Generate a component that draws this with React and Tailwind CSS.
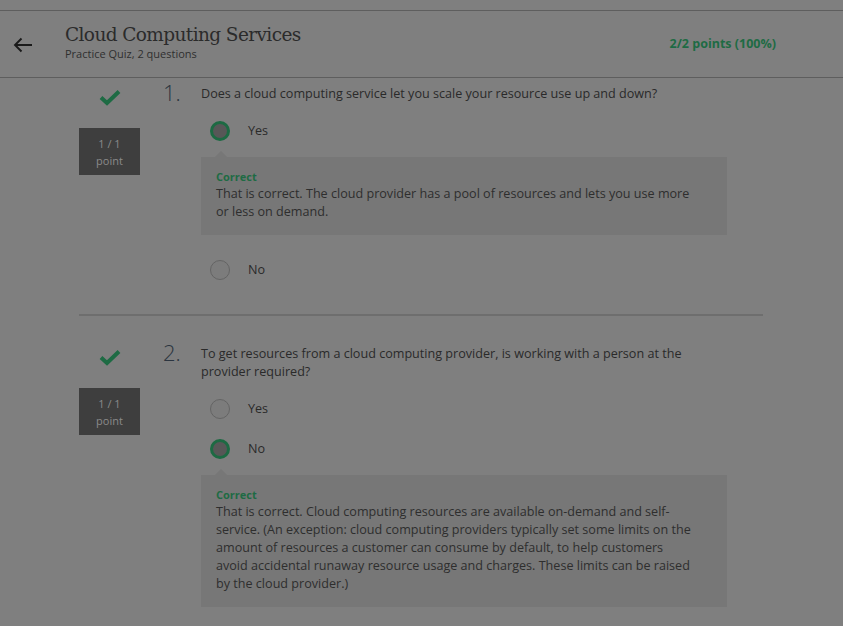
import React from "react";

const GREEN = "#1e6b44";

function Check() {
  return (
    <svg width="22" height="17" viewBox="0 0 22 17">
      <path d="M2 8.5 L8 14 L20 2.5" fill="none" stroke={GREEN} strokeWidth="4" strokeLinejoin="miter" />
    </svg>
  );
}

function Radio({ selected }) {
  if (selected) {
    return <div className="w-5 h-5 rounded-full border-[3px] border-[#1d6a43] bg-[#575757] shrink-0" />;
  }
  return <div className="w-5 h-5 rounded-full border border-[#646464] bg-[#7c7c7c] shrink-0" />;
}

function Option({ label, selected }) {
  return (
    <div className="flex items-center h-10 pl-[9px]">
      <Radio selected={selected} />
      <span className="ml-[18px] text-[12.6px] text-[#2a2a2a]">{label}</span>
    </div>
  );
}

function Feedback({ children }) {
  return (
    <div className="relative mt-[6px] bg-[#777777] pl-[15px] pr-[30px] pt-[12px] pb-[14px]">
      <div className="absolute -top-[6px] left-[14px] w-0 h-0 border-l-[6px] border-r-[6px] border-b-[6px] border-l-transparent border-r-transparent border-b-[#777777]" />
      <div className="text-[11px] font-bold text-[#1e6b44] leading-[16px]">Correct</div>
      <div className="text-[12.6px] leading-[18px] text-[#2e2e2e]">{children}</div>
    </div>
  );
}

function Question({ num, text, options }) {
  return (
    <div className="flex">
      <div className="w-[61px] shrink-0 flex flex-col items-center">
        <div className="mt-[4px] h-[17px] flex items-center justify-center pl-[1px]">
          <Check />
        </div>
        <div className="mt-[22px] w-[61px] h-[47px] bg-[#3e3e3e] flex flex-col items-center justify-center text-[11px] leading-[17px] text-[#8a8a8a]">
          <div>1 / 1</div>
          <div>point</div>
        </div>
      </div>
      <div className="w-[38px] ml-[23px] shrink-0 text-[22px] font-light leading-[18px] text-[#2b3540] -mt-[2px]">
        {num}.
      </div>
      <div className="w-[526px]">
        <div className="text-[12.6px] leading-[18px] text-[#2a2a2a] pr-[30px]">{text}</div>
        <div className="mt-[8px]">{options}</div>
      </div>
    </div>
  );
}

export default function App() {
  return (
    <div
      className="w-[843px] h-[626px] bg-[#7f7f7f] overflow-hidden"
      style={{ fontFamily: '"Open Sans", "Liberation Sans", sans-serif' }}
    >
      <div className="h-[10px]" />
      <div className="h-[68px] border-t border-b border-[#5e5e5e] flex items-center">
        <div className="w-[65px] shrink-0 flex items-center pl-[13px] pt-[1px]">
          <svg width="20" height="16" viewBox="0 0 20 16">
            <path d="M19 8 H2 M8.5 1.5 L2 8 L8.5 14.5" fill="none" stroke="#1a1a1a" strokeWidth="1.9" />
          </svg>
        </div>
        <div className="flex-1 flex flex-col -mt-[4px]">
          <div
            className="text-[18.5px] leading-[24px] tracking-[-0.6px] text-[#2b2b2b]"
            style={{ fontFamily: '"DejaVu Serif", "Liberation Serif", serif' }}
          >
            Cloud Computing Services
          </div>
          <div className="text-[11px] leading-[14px] text-[#2f2f2f]">Practice Quiz, 2 questions</div>
        </div>
        <div className="pr-[67px] text-[12.5px] font-bold text-[#1e6b44]">2/2 points (100%)</div>
      </div>

      <div className="pl-[79px] w-[763px]">
        <div className="pt-[7px]">
          <Question
            num="1"
            text="Does a cloud computing service let you scale your resource use up and down?"
            options={
              <>
                <Option label="Yes" selected />
                <Feedback>
                  That is correct. The cloud provider has a pool of resources and lets you use more or less on demand.
                </Feedback>
                <div className="mt-[15px]">
                  <Option label="No" />
                </div>
              </>
            }
          />
        </div>
        <div className="mt-[24px] border-t-2 border-[#6e6e6e]" />
        <div className="pt-[29px]">
          <Question
            num="2"
            text="To get resources from a cloud computing provider, is working with a person at the provider required?"
            options={
              <>
                <Option label="Yes" />
                <Option label="No" selected />
                <Feedback>
                  That is correct. Cloud computing resources are available on-demand and self-service. (An exception: cloud computing providers typically set some limits on the amount of resources a customer can consume by default, to help customers avoid accidental runaway resource usage and charges. These limits can be raised by the cloud provider.)
                </Feedback>
              </>
            }
          />
        </div>
      </div>
    </div>
  );
}
